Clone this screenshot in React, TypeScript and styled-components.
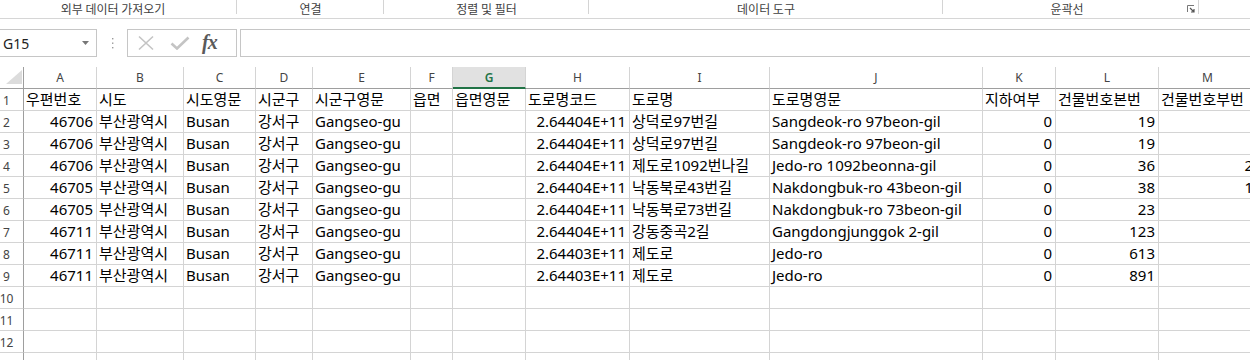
import React from "react";
import styled, { createGlobalStyle } from "styled-components";

const Global = createGlobalStyle`
  html, body { margin: 0; padding: 0; background: #fff; overflow: hidden; }
  body { font-family: "Noto Sans", "Noto Sans CJK KR", sans-serif; }
`;

const Page = styled.div`
  width: 1250px;
  height: 360px;
  overflow: hidden;
  background: #fff;
`;

const RibbonLabels = styled.div`
  display: flex;
  height: 18px;
  border-bottom: 1px solid #d6d6d6;
`;

const Group = styled.div<{ $w: number; $pr?: number; $last?: boolean }>`
  flex: 0 0 ${(p) => p.$w}px;
  display: flex;
  align-items: center;
  justify-content: center;
  padding-right: ${(p) => p.$pr ?? 0}px;
  box-sizing: border-box;
  font-family: "Noto Sans CJK KR", sans-serif;
  font-size: 12px;
  color: #3f3f3f;
  line-height: 18px;
  background: ${(p) =>
    p.$last ? "none" : "linear-gradient(#d4d4d4, #d4d4d4) right top / 1px 14px no-repeat"};
`;

const Launcher = styled.svg`
  margin-left: auto;
  margin-right: 4px;
  flex: 0 0 auto;
`;

const GroupLabel = styled.span<{ $pl?: number }>`
  flex: 1;
  text-align: center;
  padding-left: ${(p) => p.$pl ?? 0}px;
`;

const FormulaBar = styled.div`
  display: flex;
  height: 28px;
  margin-top: 10px;
`;

const NameBox = styled.div`
  width: 97px;
  box-sizing: border-box;
  border: 1px solid #c6c6c6;
  border-left: none;
  display: flex;
  align-items: center;
  padding-left: 3px;
  font-size: 14px;
  color: #222;
`;

const NameText = styled.span`
  flex: 1;
`;

const DropArrow = styled.svg`
  margin-right: 7px;
`;

const Grip = styled.div`
  width: 30px;
  display: flex;
  align-items: center;
  justify-content: center;
`;

const ButtonsBox = styled.div`
  width: 110px;
  box-sizing: border-box;
  border: 1px solid #c6c6c6;
  display: flex;
  align-items: center;
  padding-left: 9px;
`;

const IconSlot = styled.div`
  width: 36px;
  display: flex;
  align-items: center;
  justify-content: flex-start;
`;

const Fx = styled.span`
  font-family: "Liberation Serif", "DejaVu Serif", serif;
  font-style: italic;
  font-weight: bold;
  font-size: 20px;
  color: #5a5a5a;
  letter-spacing: -1px;
  margin-left: -1px;
  margin-top: -2px;
`;

const FormulaInput = styled.div`
  flex: 1;
  margin-left: 3px;
  border: 1px solid #c6c6c6;
  border-right: none;
`;

const Sheet = styled.div`
  margin-top: 10px;
`;

const COLS = "24px 73px 87px 72px 57px 98px 42px 73px 104px 140px 213px 73px 103px 98px";

const HeaderRow = styled.div`
  display: grid;
  grid-template-columns: ${COLS};
  height: 22px;
`;

const Corner = styled.div`
  box-sizing: border-box;
  border-right: 1px solid #9e9e9e;
  border-bottom: 1px solid #9e9e9e;
  display: flex;
  align-items: flex-end;
  justify-content: flex-end;
  padding: 0 1px 4px 0;
`;

const ColHead = styled.div<{ $sel?: boolean }>`
  box-sizing: border-box;
  border-right: 1px solid #d4d4d4;
  border-bottom: ${(p) => (p.$sel ? "2px solid #217346" : "1px solid #9e9e9e")};
  background: ${(p) => (p.$sel ? "#e1e1e1" : "#fff")};
  color: ${(p) => (p.$sel ? "#217346" : "#444")};
  font-weight: ${(p) => (p.$sel ? 600 : 400)};
  font-size: 12px;
  display: flex;
  align-items: center;
  justify-content: center;
  padding-top: ${(p) => (p.$sel ? 1 : 0)}px;
`;

const Row = styled.div`
  display: grid;
  grid-template-columns: ${COLS};
  height: 22px;
`;

const RowHead = styled.div`
  box-sizing: border-box;
  border-right: 1px solid #9e9e9e;
  border-bottom: 1px solid #d4d4d4;
  font-size: 12px;
  color: #444;
  display: flex;
  align-items: center;
  justify-content: center;
  padding-right: 10px;
  padding-top: 1px;
`;

const Cell = styled.div<{ $num?: boolean }>`
  box-sizing: border-box;
  border-right: 1px solid #d4d4d4;
  border-bottom: 1px solid #d4d4d4;
  font-size: 15px;
  color: #000;
  white-space: nowrap;
  overflow: hidden;
  display: flex;
  align-items: center;
  justify-content: ${(p) => (p.$num ? "flex-end" : "flex-start")};
  padding: 0 ${(p) => (p.$num ? 3 : 0)}px 0 ${(p) => (p.$num ? 0 : 2)}px;
  line-height: 21px;
`;

const letters = ["A", "B", "C", "D", "E", "F", "G", "H", "I", "J", "K", "L", "M"];
const numCols = new Set([0, 7, 10, 11, 12]);

const header = [
  "우편번호", "시도", "시도영문", "시군구", "시군구영문", "읍면", "읍면영문",
  "도로명코드", "도로명", "도로명영문", "지하여부", "건물번호본번", "건물번호부번",
];

const mk = (zip: string, code: string, road: string, roadEn: string, main: string, sub: string) => [
  zip, "부산광역시", "Busan", "강서구", "Gangseo-gu", "", "", code, road, roadEn, "0", main, sub,
];

const data = [
  mk("46706", "2.64404E+11", "상덕로97번길", "Sangdeok-ro 97beon-gil", "19", ""),
  mk("46706", "2.64404E+11", "상덕로97번길", "Sangdeok-ro 97beon-gil", "19", ""),
  mk("46706", "2.64404E+11", "제도로1092번나길", "Jedo-ro 1092beonna-gil", "36", "2"),
  mk("46705", "2.64404E+11", "낙동북로43번길", "Nakdongbuk-ro 43beon-gil", "38", "1"),
  mk("46705", "2.64404E+11", "낙동북로73번길", "Nakdongbuk-ro 73beon-gil", "23", ""),
  mk("46711", "2.64404E+11", "강동중곡2길", "Gangdongjunggok 2-gil", "123", ""),
  mk("46711", "2.64403E+11", "제도로", "Jedo-ro", "613", ""),
  mk("46711", "2.64403E+11", "제도로", "Jedo-ro", "891", ""),
];

const emptyRow = Array(13).fill("");

export default function App() {
  const rows: string[][] = [header, ...data, emptyRow, emptyRow, emptyRow, emptyRow];
  return (
    <Page>
      <Global />
      <RibbonLabels>
        <Group $w={237} $pr={11}>
          <GroupLabel>외부 데이터 가져오기</GroupLabel>
        </Group>
        <Group $w={147}>
          <GroupLabel>연결</GroupLabel>
        </Group>
        <Group $w={205}>
          <GroupLabel>정렬 및 필터</GroupLabel>
        </Group>
        <Group $w={354}>
          <GroupLabel>데이터 도구</GroupLabel>
        </Group>
        <Group $w={256}>
          <GroupLabel $pl={4}>윤곽선</GroupLabel>
          <Launcher width="8" height="8" viewBox="0 0 8 8">
            <path d="M0.5 7V0.5H7" fill="none" stroke="#777" strokeWidth="1" />
            <path d="M3 3L7 7M7 4V7H4" fill="none" stroke="#555" strokeWidth="1.2" />
          </Launcher>
        </Group>
        <Group $w={51} $last />
      </RibbonLabels>

      <FormulaBar>
        <NameBox>
          <NameText>G15</NameText>
          <DropArrow width="7" height="4" viewBox="0 0 7 4">
            <path d="M0 0H7L3.5 4Z" fill="#777" />
          </DropArrow>
        </NameBox>
        <Grip>
          <svg width="3" height="11" viewBox="0 0 3 11">
            <rect x="1" y="0" width="1.4" height="1.4" fill="#9a9a9a" />
            <rect x="1" y="4.5" width="1.4" height="1.4" fill="#9a9a9a" />
            <rect x="1" y="9" width="1.4" height="1.4" fill="#9a9a9a" />
          </svg>
        </Grip>
        <ButtonsBox>
          <IconSlot>
            <svg width="18" height="16" viewBox="0 0 18 16">
              <path d="M2 1.5L16 14.5M16 1.5L2 14.5" stroke="#c4c4c4" strokeWidth="1.6" fill="none" />
            </svg>
          </IconSlot>
          <IconSlot>
            <svg width="20" height="14" viewBox="0 0 20 14">
              <path d="M1.5 7.5L7 12.5L18.5 1.5" stroke="#c4c4c4" strokeWidth="2.6" fill="none" />
            </svg>
          </IconSlot>
          <IconSlot>
            <Fx>fx</Fx>
          </IconSlot>
        </ButtonsBox>
        <FormulaInput />
      </FormulaBar>

      <Sheet>
        <HeaderRow>
          <Corner>
            <svg width="16" height="14" viewBox="0 0 16 14">
              <path d="M16 0V14H0Z" fill="#dcdcdc" />
            </svg>
          </Corner>
          {letters.map((l) => (
            <ColHead key={l} $sel={l === "G"}>
              {l}
            </ColHead>
          ))}
        </HeaderRow>
        {rows.map((r, i) => (
          <Row key={i}>
            <RowHead>{i < 12 ? i + 1 : ""}</RowHead>
            {r.map((v, j) => (
              <Cell key={j} $num={i > 0 && numCols.has(j)}>
                {v}
              </Cell>
            ))}
          </Row>
        ))}
      </Sheet>
    </Page>
  );
}
